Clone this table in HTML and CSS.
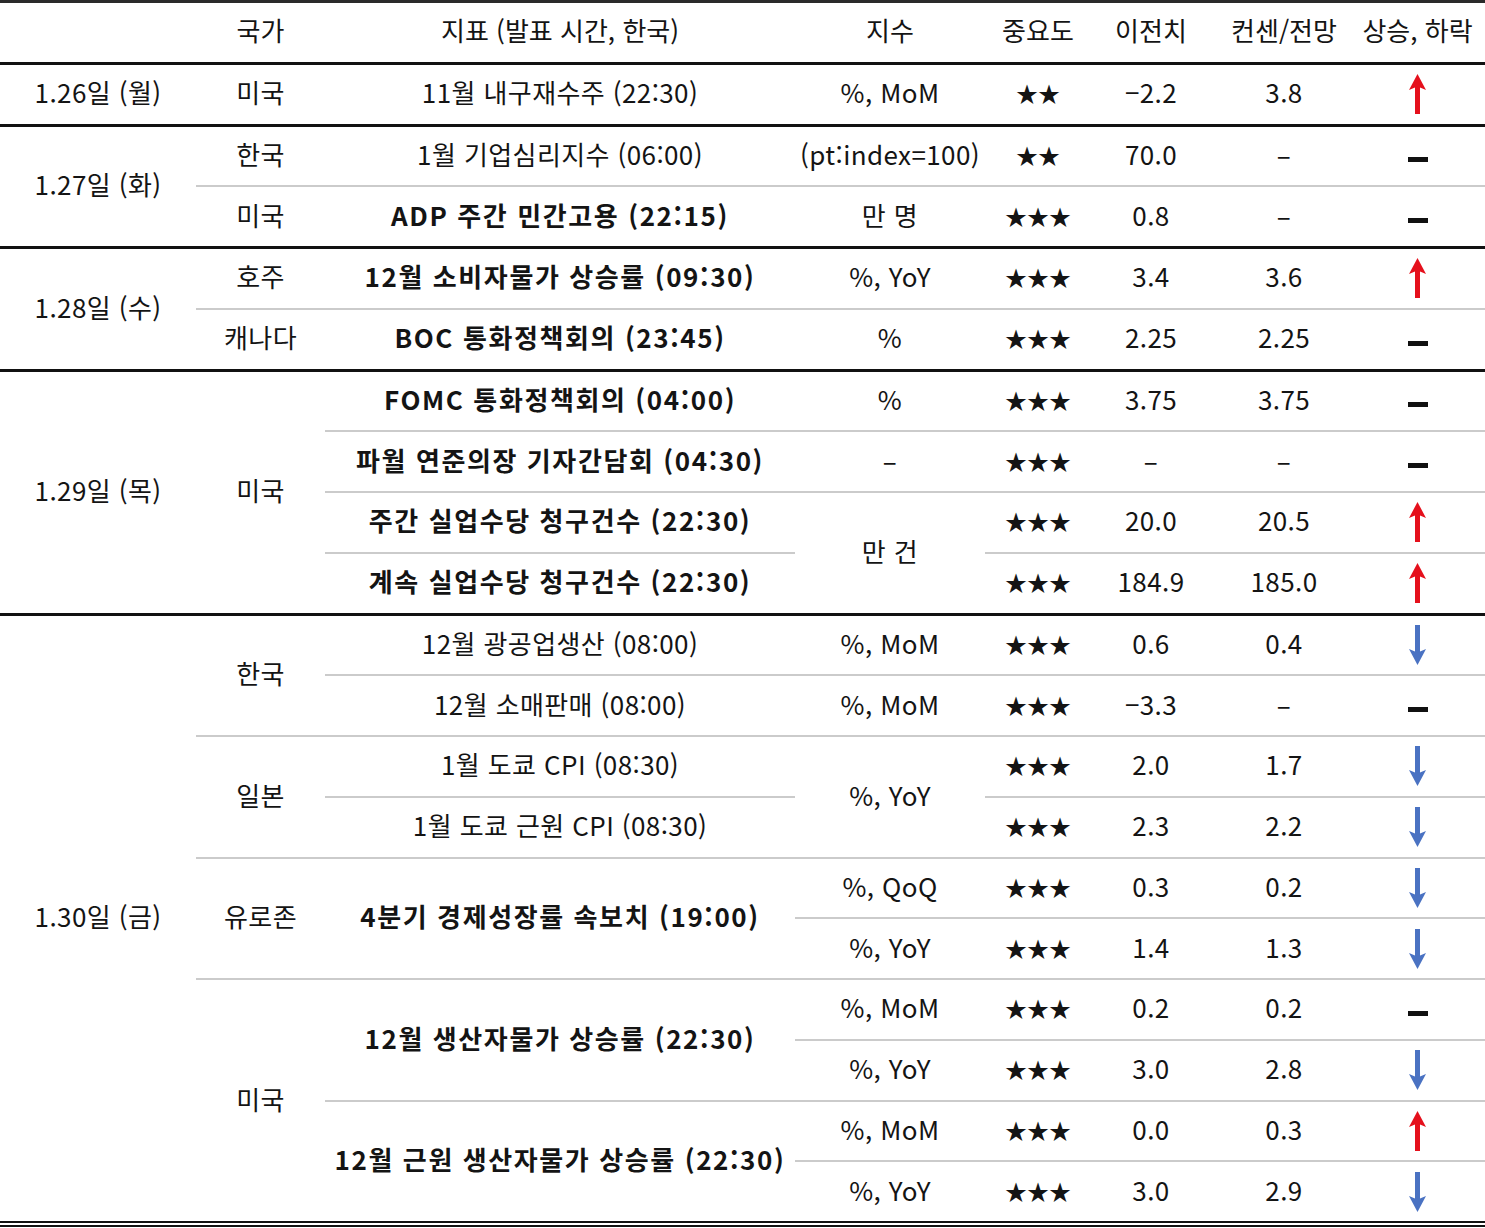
FILE: index.html
```html
<!DOCTYPE html>
<html lang="ko">
<head>
<meta charset="utf-8">
<title>주간 경제지표 일정</title>
<link rel="stylesheet" href="styles.css">
</head>
<body>
<table class="cal">
  <colgroup>
    <col class="c-date"><col class="c-country"><col class="c-ind"><col class="c-unit">
    <col class="c-imp"><col class="c-prev"><col class="c-cons"><col class="c-dir">
  </colgroup>
  <thead>
    <tr>
      <th></th><th>국가</th><th>지표 (발표 시간, 한국)</th><th>지수</th><th>중요도</th><th>이전치</th><th>컨센/전망</th><th>상승, 하락</th>
    </tr>
  </thead>
  <tbody>
    <tr>
      <td>1.26일 (월)</td><td>미국</td><td>11월 내구재수주 (22:30)</td><td>%, MoM</td><td class="star">★★</td><td>−2.2</td><td>3.8</td>
      <td><svg class="arr up" viewBox="0 0 17 40"><polygon points="8.5,0 17,16 11,13.5 11,40 6,40 6,13.5 0,16"/></svg></td>
    </tr>
  </tbody>
  <tbody>
    <tr>
      <td rowspan="2">1.27일 (화)</td><td>한국</td><td>1월 기업심리지수 (06:00)</td><td>(pt:index=100)</td><td class="star">★★</td><td>70.0</td><td>–</td>
      <td><span class="flat"></span></td>
    </tr>
    <tr>
      <td>미국</td><td class="b">ADP 주간 민간고용 (22:15)</td><td>만 명</td><td class="star">★★★</td><td>0.8</td><td>–</td>
      <td><span class="flat"></span></td>
    </tr>
  </tbody>
  <tbody>
    <tr>
      <td rowspan="2">1.28일 (수)</td><td>호주</td><td class="b">12월 소비자물가 상승률 (09:30)</td><td>%, YoY</td><td class="star">★★★</td><td>3.4</td><td>3.6</td>
      <td><svg class="arr up" viewBox="0 0 17 40"><polygon points="8.5,0 17,16 11,13.5 11,40 6,40 6,13.5 0,16"/></svg></td>
    </tr>
    <tr>
      <td>캐나다</td><td class="b">BOC 통화정책회의 (23:45)</td><td>%</td><td class="star">★★★</td><td>2.25</td><td>2.25</td>
      <td><span class="flat"></span></td>
    </tr>
  </tbody>
  <tbody>
    <tr>
      <td rowspan="4">1.29일 (목)</td><td rowspan="4">미국</td><td class="b">FOMC 통화정책회의 (04:00)</td><td>%</td><td class="star">★★★</td><td>3.75</td><td>3.75</td>
      <td><span class="flat"></span></td>
    </tr>
    <tr>
      <td class="b">파월 연준의장 기자간담회 (04:30)</td><td>–</td><td class="star">★★★</td><td>–</td><td>–</td>
      <td><span class="flat"></span></td>
    </tr>
    <tr>
      <td class="b">주간 실업수당 청구건수 (22:30)</td><td rowspan="2">만 건</td><td class="star">★★★</td><td>20.0</td><td>20.5</td>
      <td><svg class="arr up" viewBox="0 0 17 40"><polygon points="8.5,0 17,16 11,13.5 11,40 6,40 6,13.5 0,16"/></svg></td>
    </tr>
    <tr>
      <td class="b">계속 실업수당 청구건수 (22:30)</td><td class="star">★★★</td><td>184.9</td><td>185.0</td>
      <td><svg class="arr up" viewBox="0 0 17 40"><polygon points="8.5,0 17,16 11,13.5 11,40 6,40 6,13.5 0,16"/></svg></td>
    </tr>
  </tbody>
  <tbody class="last">
    <tr>
      <td rowspan="10">1.30일 (금)</td><td rowspan="2">한국</td><td>12월 광공업생산 (08:00)</td><td>%, MoM</td><td class="star">★★★</td><td>0.6</td><td>0.4</td>
      <td><svg class="arr down" viewBox="0 0 17 40"><polygon points="8.5,40 17,24 11,26.5 11,0 6,0 6,26.5 0,24"/></svg></td>
    </tr>
    <tr>
      <td>12월 소매판매 (08:00)</td><td>%, MoM</td><td class="star">★★★</td><td>−3.3</td><td>–</td>
      <td><span class="flat"></span></td>
    </tr>
    <tr>
      <td rowspan="2">일본</td><td>1월 도쿄 CPI (08:30)</td><td rowspan="2">%, YoY</td><td class="star">★★★</td><td>2.0</td><td>1.7</td>
      <td><svg class="arr down" viewBox="0 0 17 40"><polygon points="8.5,40 17,24 11,26.5 11,0 6,0 6,26.5 0,24"/></svg></td>
    </tr>
    <tr>
      <td>1월 도쿄 근원 CPI (08:30)</td><td class="star">★★★</td><td>2.3</td><td>2.2</td>
      <td><svg class="arr down" viewBox="0 0 17 40"><polygon points="8.5,40 17,24 11,26.5 11,0 6,0 6,26.5 0,24"/></svg></td>
    </tr>
    <tr>
      <td rowspan="2">유로존</td><td rowspan="2" class="b">4분기 경제성장률 속보치 (19:00)</td><td>%, QoQ</td><td class="star">★★★</td><td>0.3</td><td>0.2</td>
      <td><svg class="arr down" viewBox="0 0 17 40"><polygon points="8.5,40 17,24 11,26.5 11,0 6,0 6,26.5 0,24"/></svg></td>
    </tr>
    <tr>
      <td>%, YoY</td><td class="star">★★★</td><td>1.4</td><td>1.3</td>
      <td><svg class="arr down" viewBox="0 0 17 40"><polygon points="8.5,40 17,24 11,26.5 11,0 6,0 6,26.5 0,24"/></svg></td>
    </tr>
    <tr>
      <td rowspan="4">미국</td><td rowspan="2" class="b">12월 생산자물가 상승률 (22:30)</td><td>%, MoM</td><td class="star">★★★</td><td>0.2</td><td>0.2</td>
      <td><span class="flat"></span></td>
    </tr>
    <tr>
      <td>%, YoY</td><td class="star">★★★</td><td>3.0</td><td>2.8</td>
      <td><svg class="arr down" viewBox="0 0 17 40"><polygon points="8.5,40 17,24 11,26.5 11,0 6,0 6,26.5 0,24"/></svg></td>
    </tr>
    <tr>
      <td rowspan="2" class="b">12월 근원 생산자물가 상승률 (22:30)</td><td>%, MoM</td><td class="star">★★★</td><td>0.0</td><td>0.3</td>
      <td><svg class="arr up" viewBox="0 0 17 40"><polygon points="8.5,0 17,16 11,13.5 11,40 6,40 6,13.5 0,16"/></svg></td>
    </tr>
    <tr>
      <td>%, YoY</td><td class="star">★★★</td><td>3.0</td><td>2.9</td>
      <td><svg class="arr down" viewBox="0 0 17 40"><polygon points="8.5,40 17,24 11,26.5 11,0 6,0 6,26.5 0,24"/></svg></td>
    </tr>
  </tbody>
</table>
</body>
</html>
```
FILE: styles.css
```css
html, body {
  margin: 0;
  padding: 0;
  background: #ffffff;
}

body {
  font-family: "Noto Sans CJK KR", "Noto Sans", sans-serif;
  color: #141414;
}

.cal {
  width: 1485px;
  border-collapse: collapse;
  table-layout: fixed;
  font-size: 26px;
  letter-spacing: 0.4px;
}

.c-date { width: 196px; }
.c-country { width: 129px; }
.c-ind { width: 470px; }
.c-unit { width: 190px; }
.c-imp { width: 106px; }
.c-prev { width: 120px; }
.c-cons { width: 146px; }
.c-dir { width: 128px; }

.cal thead {
  border-top: 3px solid #2a2a2a;
  border-bottom: 3px solid #111111;
}

.cal th,
.cal td {
  height: 54.75px;
  padding: 0 0 4px;
  text-align: center;
  vertical-align: middle;
  font-weight: 400;
  white-space: nowrap;
  line-height: 1;
}

.cal th {
  letter-spacing: 0;
}

.cal td {
  border-bottom: 2px solid #cbcbcb;
}

.cal th:last-child,
.cal td:last-child {
  padding: 0 7px 0 0;
  height: 58.75px;
}

.cal th:last-child {
  padding-bottom: 4px;
  height: 54.75px;
}

.cal tbody {
  border-bottom: 3px solid #111111;
}

.cal tbody.last {
  border-bottom: 6px double #111111;
}

.cal td.b {
  font-weight: 700;
  letter-spacing: 1.6px;
}

.cal td.star {
  font-size: 22px;
  letter-spacing: 0;
}

.arr {
  display: inline-block;
  width: 17px;
  height: 40px;
  vertical-align: middle;
}

.arr.up polygon { fill: #e5101c; }
.arr.down polygon { fill: #4a72c2; }

.flat {
  display: inline-block;
  width: 20px;
  height: 5px;
  background: #111111;
  vertical-align: middle;
}
```
